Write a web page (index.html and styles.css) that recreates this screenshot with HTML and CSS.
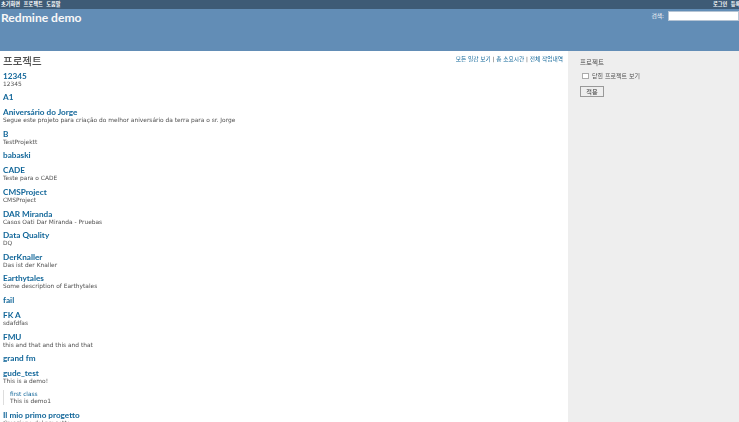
FILE: index.html
```html
<!DOCTYPE html>
<html lang="ko">
<head>
<meta charset="utf-8">
<title>Redmine demo</title>
<link rel="stylesheet" href="styles.css">
</head>
<body>
<div class="page">
<div class="top-menu">
  <ul class="menu-list">
    <li><a href="#">초기화면</a></li>
    <li><a href="#">프로젝트</a></li>
    <li><a href="#">도움말</a></li>
  </ul>
  <ul class="menu-list account">
    <li><a href="#">로그인</a></li>
    <li><a href="#">등록</a></li>
  </ul>
</div>
<header class="header">
  <h1 class="site-title">Redmine demo</h1>
  <form class="search">
    <label class="search-label">검색:</label>
    <input class="search-input" type="text">
  </form>
</header>
<div class="main">
  <main class="content">
    <div class="content-head">
      <h2 class="page-title">프로젝트</h2>
      <div class="contextual">
        <a href="#">모든 일감 보기</a> | <a href="#">총 소요시간</a> | <a href="#">전체 작업내역</a>
      </div>
    </div>
    <div class="project"><a class="p-name" href="#">12345</a><div class="p-desc">12345</div></div>
    <div class="project"><a class="p-name" href="#">A1</a></div>
    <div class="project"><a class="p-name" href="#">Aniversário do Jorge</a><div class="p-desc">Segue este projeto para criação do melhor aniversário da terra para o sr. Jorge</div></div>
    <div class="project"><a class="p-name" href="#">B</a><div class="p-desc">TestProjektt</div></div>
    <div class="project"><a class="p-name" href="#">babaski</a></div>
    <div class="project"><a class="p-name" href="#">CADE</a><div class="p-desc">Teste para o CADE</div></div>
    <div class="project"><a class="p-name" href="#">CMSProject</a><div class="p-desc">CMSProject</div></div>
    <div class="project"><a class="p-name" href="#">DAR Miranda</a><div class="p-desc">Casos Oati Dar Miranda - Pruebas</div></div>
    <div class="project"><a class="p-name" href="#">Data Quality</a><div class="p-desc">DQ</div></div>
    <div class="project"><a class="p-name" href="#">DerKnaller</a><div class="p-desc">Das ist der Knaller</div></div>
    <div class="project"><a class="p-name" href="#">Earthytales</a><div class="p-desc">Some description of Earthytales</div></div>
    <div class="project"><a class="p-name" href="#">fail</a></div>
    <div class="project"><a class="p-name" href="#">FK A</a><div class="p-desc">sdafdfas</div></div>
    <div class="project"><a class="p-name" href="#">FMU</a><div class="p-desc">this and that and this and that</div></div>
    <div class="project"><a class="p-name" href="#">grand fm</a></div>
    <div class="project"><a class="p-name" href="#">gude_test</a><div class="p-desc">This is a demo!</div>
      <div class="child"><a class="c-name" href="#">first class</a><div class="p-desc">This is demo1</div></div>
    </div>
    <div class="project"><a class="p-name" href="#">Il mio primo progetto</a><div class="p-desc">Creazione del progetto</div></div>
  </main>
  <aside class="sidebar">
    <h3 class="side-title">프로젝트</h3>
    <label class="side-check"><input class="checkbox" type="checkbox"> 닫힌 프로젝트 보기</label>
    <button class="apply" type="button">적용</button>
  </aside>
</div>
</div>
</body>
</html>
```
FILE: styles.css
```css
html, body { margin: 0; padding: 0; height: 422px; overflow: hidden; background: #fff; }
body {
  font-family: "DejaVu Sans", "Noto Sans CJK KR", sans-serif;
  font-size: 6px;
  color: #505050;
}
.page { height: 422px; overflow: hidden; filter: blur(0.3px); }
a { color: #169; text-decoration: none; }
.top-menu {
  height: 8.6px;
  background: #3e5b76;
  display: flex;
  justify-content: space-between;
  overflow: hidden;
  line-height: 8px;
  font-size: 5.2px;
}
.menu-list { list-style: none; display: flex; gap: 3.5px; margin: 0; padding: 0 0 0 1px; }
.menu-list.account { width: 26px; flex: none; padding: 0; white-space: nowrap; overflow: hidden; }
.menu-list a { color: #fff; font-weight: bold; white-space: nowrap; }
.header {
  height: 42.2px;
  background: #628db6;
  color: #f8f8f8;
  display: flex;
  justify-content: space-between;
  align-items: flex-start;
}
.site-title { margin: 2.5px 0 0 1px; font-family: Lato, sans-serif; font-size: 12.1px; line-height: 14px; font-weight: bold; }
.search { display: flex; align-items: center; gap: 4px; margin-top: 2px; }
.search-label { font-size: 5.8px; }
.search-input { width: 71px; height: 10px; box-sizing: border-box; border: 1px solid #b5c4d4; padding: 0; margin: 0; background: #fff; display: block; }
.main { display: flex; height: 371.2px; overflow: hidden; }
.content { flex: 1; min-width: 0; padding: 3px 5px 0 3px; }
.content-head { display: flex; justify-content: space-between; align-items: flex-start; margin-bottom: 4.9px; }
.page-title { margin: 0; font-size: 10.5px; line-height: 13px; font-weight: 500; color: #505050; font-family: "Noto Sans CJK KR", sans-serif; }
.contextual { font-size: 5.7px; line-height: 9px; padding-top: 1px; }
.project { margin-bottom: 6px; }
.p-name { display: block; font-family: Lato, sans-serif; font-size: 8.2px; font-weight: bold; line-height: 9px; }
.p-desc { font-size: 5.9px; line-height: 6.6px; }
.child { margin: 5.5px 0 0 0; padding-left: 6px; border-left: 1px solid #ddd; }
.c-name { display: block; font-size: 5.8px; line-height: 8px; }
.sidebar { flex: none; width: 171px; box-sizing: border-box; background: #eee; padding: 7px 0 0 12px; }
.side-title { margin: 0 0 3px; font-size: 6.5px; line-height: 9px; padding-top: 1px; font-weight: normal; color: #505050; }
.side-check { display: flex; align-items: center; gap: 3.5px; font-size: 6px; line-height: 10px; margin-left: 2px; }
.checkbox { appearance: none; width: 6.5px; height: 6.5px; margin: 0; background: #fff; border: 1px solid #aaa; box-sizing: border-box; }
.apply { display: block; margin-top: 5px; width: 24px; height: 11px; padding: 0; font-size: 6.2px; font-family: inherit; border: 1px solid #999; background: #eee; color: #333; }
```
